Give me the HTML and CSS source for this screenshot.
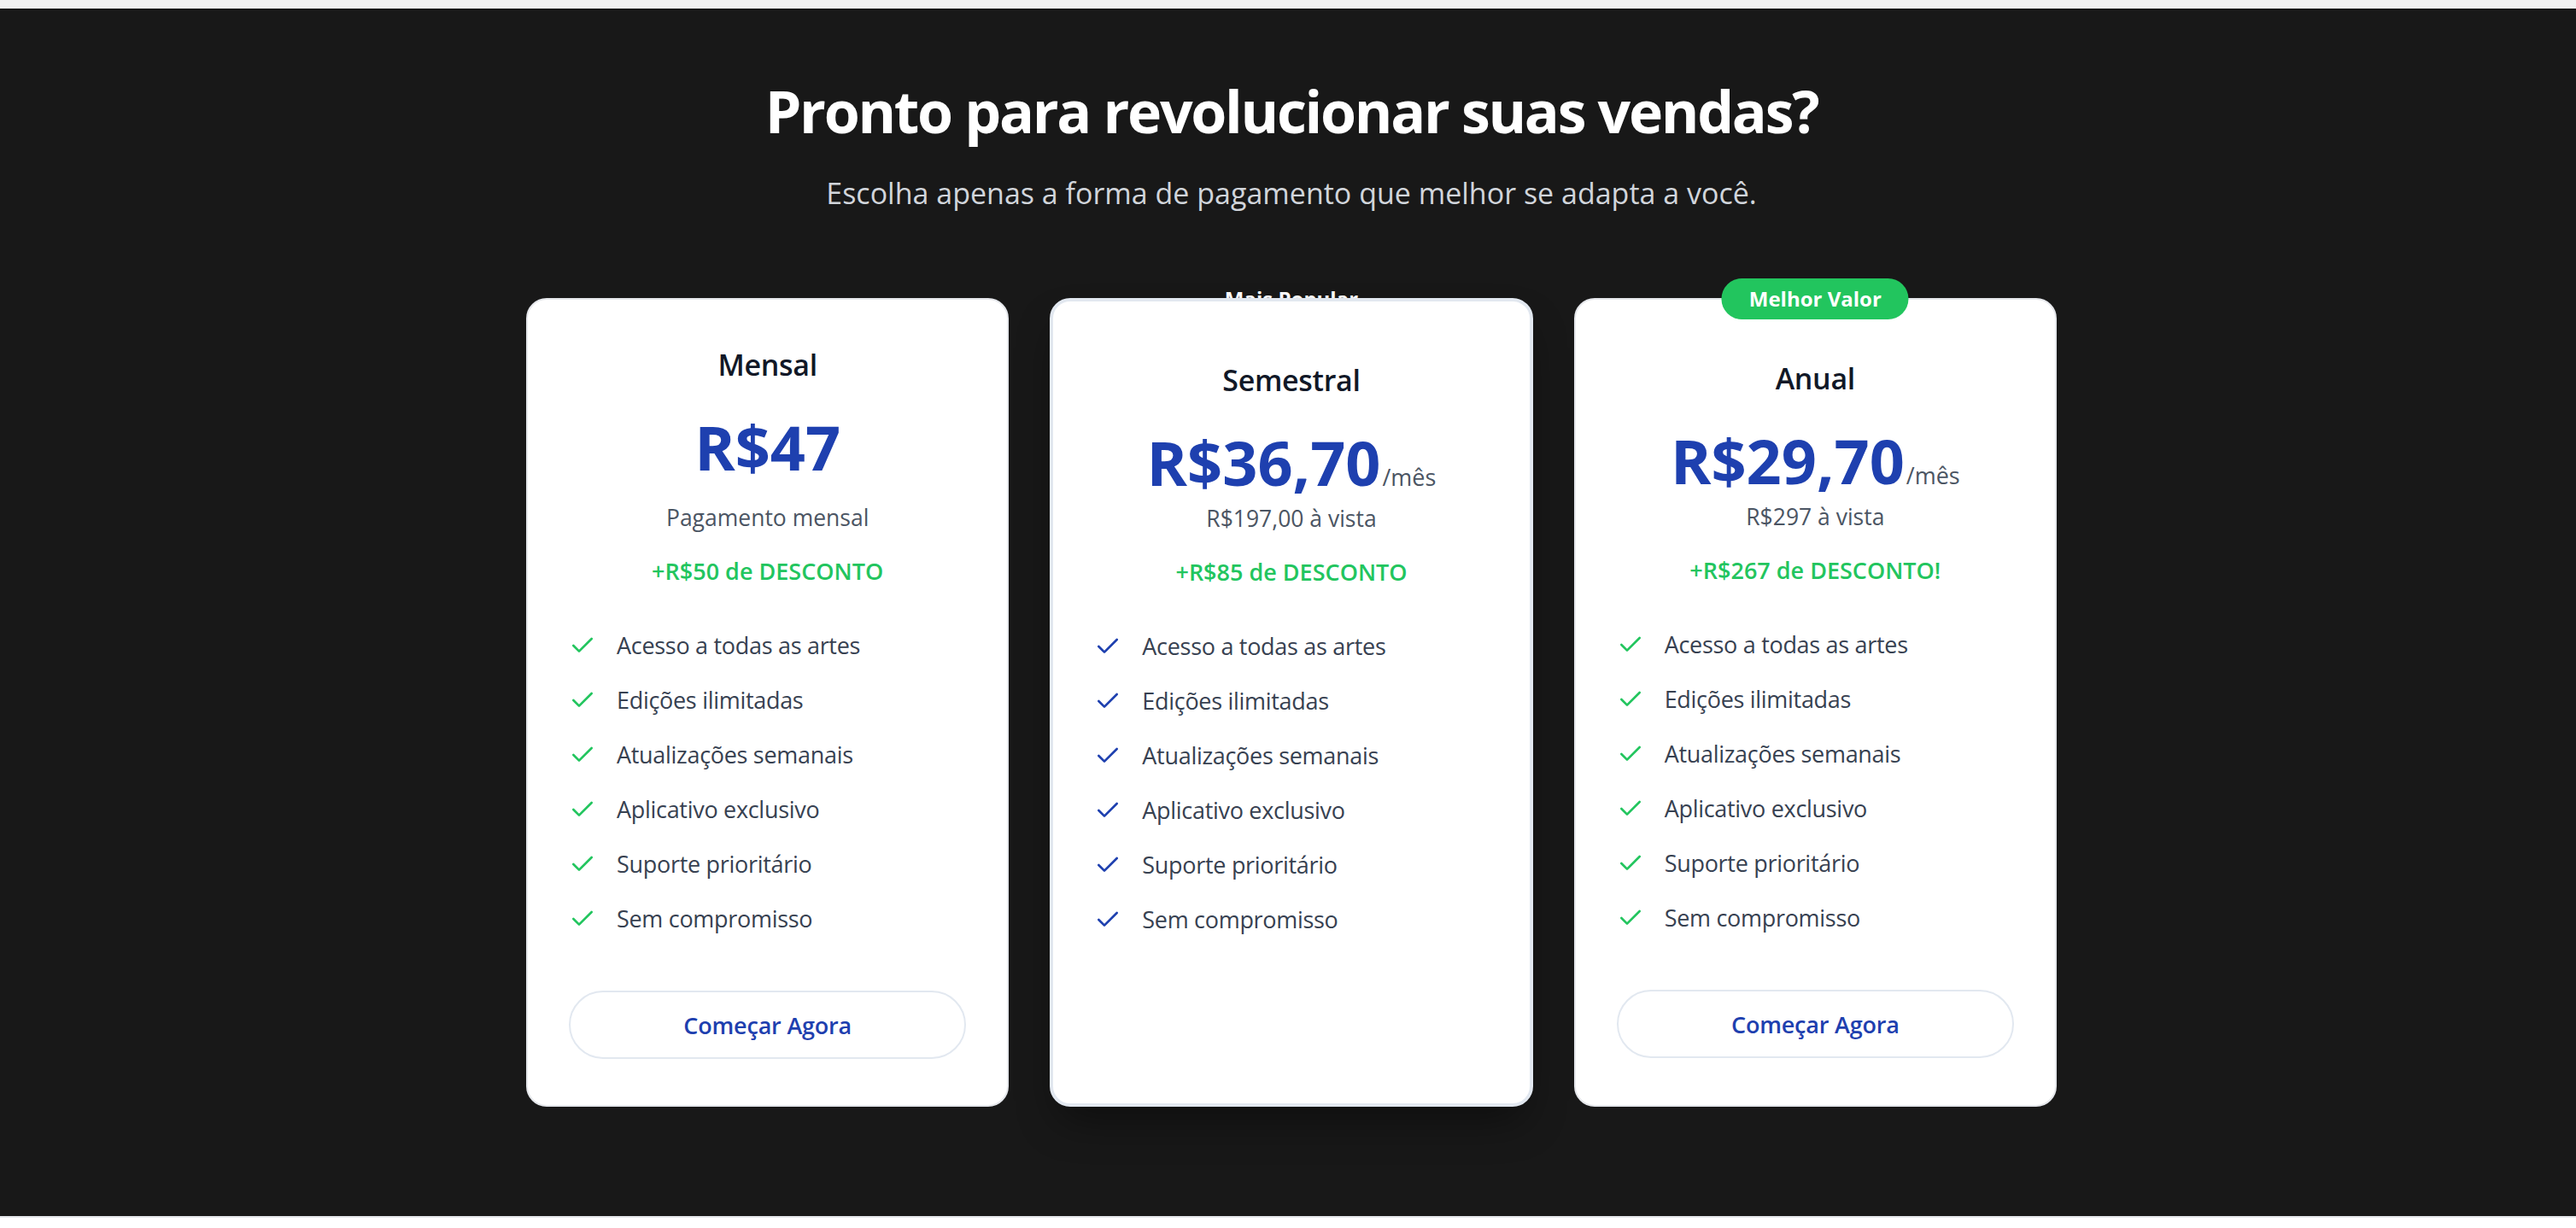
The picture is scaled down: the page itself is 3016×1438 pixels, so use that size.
FILE: index.html
```html
<!DOCTYPE html>
<html lang="pt-BR">
<head>
<meta charset="utf-8">
<title>Planos</title>
<link rel="stylesheet" href="styles.css">
</head>
<body>
<div class="topband"></div>
<section class="pricing">
  <h2 class="title">Pronto para revolucionar suas vendas?</h2>
  <p class="subtitle">Escolha apenas a forma de pagamento que melhor se adapta a você.</p>
  <div class="cards">
    <div class="card card-basic">
      <h3 class="plan">Mensal</h3>
      <div class="price-row"><span class="price">R$47</span></div>
      <p class="note note-spaced">Pagamento mensal</p>
      <p class="discount">+R$50 de DESCONTO</p>
      <ul class="features green">
        <li><svg viewBox="0 0 24 24"><path d="M20 6 9 17l-5-5"/></svg><span>Acesso a todas as artes</span></li>
        <li><svg viewBox="0 0 24 24"><path d="M20 6 9 17l-5-5"/></svg><span>Edições ilimitadas</span></li>
        <li><svg viewBox="0 0 24 24"><path d="M20 6 9 17l-5-5"/></svg><span>Atualizações semanais</span></li>
        <li><svg viewBox="0 0 24 24"><path d="M20 6 9 17l-5-5"/></svg><span>Aplicativo exclusivo</span></li>
        <li><svg viewBox="0 0 24 24"><path d="M20 6 9 17l-5-5"/></svg><span>Suporte prioritário</span></li>
        <li><svg viewBox="0 0 24 24"><path d="M20 6 9 17l-5-5"/></svg><span>Sem compromisso</span></li>
      </ul>
      <button class="cta">Começar Agora</button>
    </div>
    <div class="card card-popular">
      <span class="badge badge-hidden">Mais Popular</span>
      <h3 class="plan">Semestral</h3>
      <div class="price-row"><span class="price">R$36,70</span><span class="per">/mês</span></div>
      <p class="note">R$197,00 à vista</p>
      <p class="discount">+R$85 de DESCONTO</p>
      <ul class="features blue">
        <li><svg viewBox="0 0 24 24"><path d="M20 6 9 17l-5-5"/></svg><span>Acesso a todas as artes</span></li>
        <li><svg viewBox="0 0 24 24"><path d="M20 6 9 17l-5-5"/></svg><span>Edições ilimitadas</span></li>
        <li><svg viewBox="0 0 24 24"><path d="M20 6 9 17l-5-5"/></svg><span>Atualizações semanais</span></li>
        <li><svg viewBox="0 0 24 24"><path d="M20 6 9 17l-5-5"/></svg><span>Aplicativo exclusivo</span></li>
        <li><svg viewBox="0 0 24 24"><path d="M20 6 9 17l-5-5"/></svg><span>Suporte prioritário</span></li>
        <li><svg viewBox="0 0 24 24"><path d="M20 6 9 17l-5-5"/></svg><span>Sem compromisso</span></li>
      </ul>
    </div>
    <div class="card card-best">
      <span class="badge badge-green">Melhor Valor</span>
      <h3 class="plan">Anual</h3>
      <div class="price-row"><span class="price">R$29,70</span><span class="per">/mês</span></div>
      <p class="note">R$297 à vista</p>
      <p class="discount">+R$267 de DESCONTO!</p>
      <ul class="features green">
        <li><svg viewBox="0 0 24 24"><path d="M20 6 9 17l-5-5"/></svg><span>Acesso a todas as artes</span></li>
        <li><svg viewBox="0 0 24 24"><path d="M20 6 9 17l-5-5"/></svg><span>Edições ilimitadas</span></li>
        <li><svg viewBox="0 0 24 24"><path d="M20 6 9 17l-5-5"/></svg><span>Atualizações semanais</span></li>
        <li><svg viewBox="0 0 24 24"><path d="M20 6 9 17l-5-5"/></svg><span>Aplicativo exclusivo</span></li>
        <li><svg viewBox="0 0 24 24"><path d="M20 6 9 17l-5-5"/></svg><span>Suporte prioritário</span></li>
        <li><svg viewBox="0 0 24 24"><path d="M20 6 9 17l-5-5"/></svg><span>Sem compromisso</span></li>
      </ul>
      <button class="cta">Começar Agora</button>
    </div>
  </div>
</section>
<footer class="foot"></footer>
</body>
</html>
```

FILE: styles.css
```css
* { box-sizing: border-box; }

body {
  margin: 0;
  background: #ffffff;
  font-family: "Open Sans", "Noto Sans", "Liberation Sans", sans-serif;
}

.topband {
  height: 10px;
  background: #f2f2f2;
}

.pricing {
  position: relative;
  z-index: 0;
  background: #181818;
  padding: 80px 0 128px 8px;
}

.title {
  margin: 0;
  text-align: center;
  color: #ffffff;
  font-size: 68px;
  line-height: 80px;
  font-weight: 700;
  letter-spacing: -2.3px;
}

.subtitle {
  margin: 28px 0 0;
  text-align: center;
  color: #d1d5db;
  font-size: 34px;
  line-height: 56px;
}

.cards {
  display: grid;
  grid-template-columns: repeat(3, 1fr);
  gap: 48px;
  width: 1792px;
  margin: 95px auto 0;
}

.card {
  position: relative;
  background: #ffffff;
  border: 2px solid #e5e7eb;
  border-radius: 24px;
  padding: 48px 48px 54px;
  display: flex;
  flex-direction: column;
  text-align: center;
}

.card-popular {
  border: 4px solid #e2e8f0;
  padding-top: 64px;
  box-shadow: 0 25px 50px -12px rgba(0, 0, 0, 0.45);
}

.card-best {
  padding-top: 64px;
}

.badge {
  position: absolute;
  left: 50%;
  transform: translateX(-50%);
  top: -25px;
  padding: 8px 32px;
  border-radius: 9999px;
  color: #ffffff;
  font-size: 24px;
  line-height: 32px;
  font-weight: 700;
  white-space: nowrap;
}

.badge-green {
  background: #22c55e;
}

.badge-hidden {
  top: -27px;
  z-index: -1;
}

.plan {
  margin: 0;
  font-size: 34px;
  line-height: 56px;
  font-weight: 600;
  color: #111827;
  letter-spacing: -0.3px;
}

.price-row {
  margin-top: 28px;
  display: flex;
  justify-content: center;
  align-items: baseline;
}

.price {
  font-size: 72px;
  line-height: 80px;
  font-weight: 700;
  color: #1e40af;
}

.per {
  font-size: 27px;
  color: #4b5563;
  margin-left: 2px;
}

.note {
  margin: 6px 0 0;
  font-size: 26.5px;
  line-height: 40px;
  color: #4b5563;
}

.note-spaced {
  margin-top: 23px;
}

.discount {
  margin: 23px 0 0;
  font-size: 27px;
  line-height: 40px;
  font-weight: 600;
  color: #22c55e;
}

.features {
  list-style: none;
  margin: 47px 0 0;
  padding: 0;
  display: flex;
  flex-direction: column;
  gap: 24px;
  text-align: left;
}

.features li {
  display: flex;
  align-items: center;
  gap: 24px;
  font-size: 27px;
  line-height: 40px;
  letter-spacing: -0.3px;
  color: #374151;
}

.features svg {
  width: 32px;
  height: 32px;
  flex: none;
  fill: none;
  stroke: currentColor;
  stroke-width: 2;
  stroke-linecap: round;
  stroke-linejoin: round;
}

.features.green svg { color: #22c55e; }
.features.blue svg { color: #1e40af; }

.cta {
  margin-top: 64px;
  height: 80px;
  width: 100%;
  border: 2px solid #e2e8f0;
  border-radius: 9999px;
  background: #ffffff;
  color: #1e40af;
  font-family: inherit;
  font-size: 27px;
  font-weight: 600;
  letter-spacing: -0.2px;
  cursor: pointer;
}

.foot {
  border-top: 2px solid #e5e7eb;
  height: 40px;
  background: #ffffff;
}
```
